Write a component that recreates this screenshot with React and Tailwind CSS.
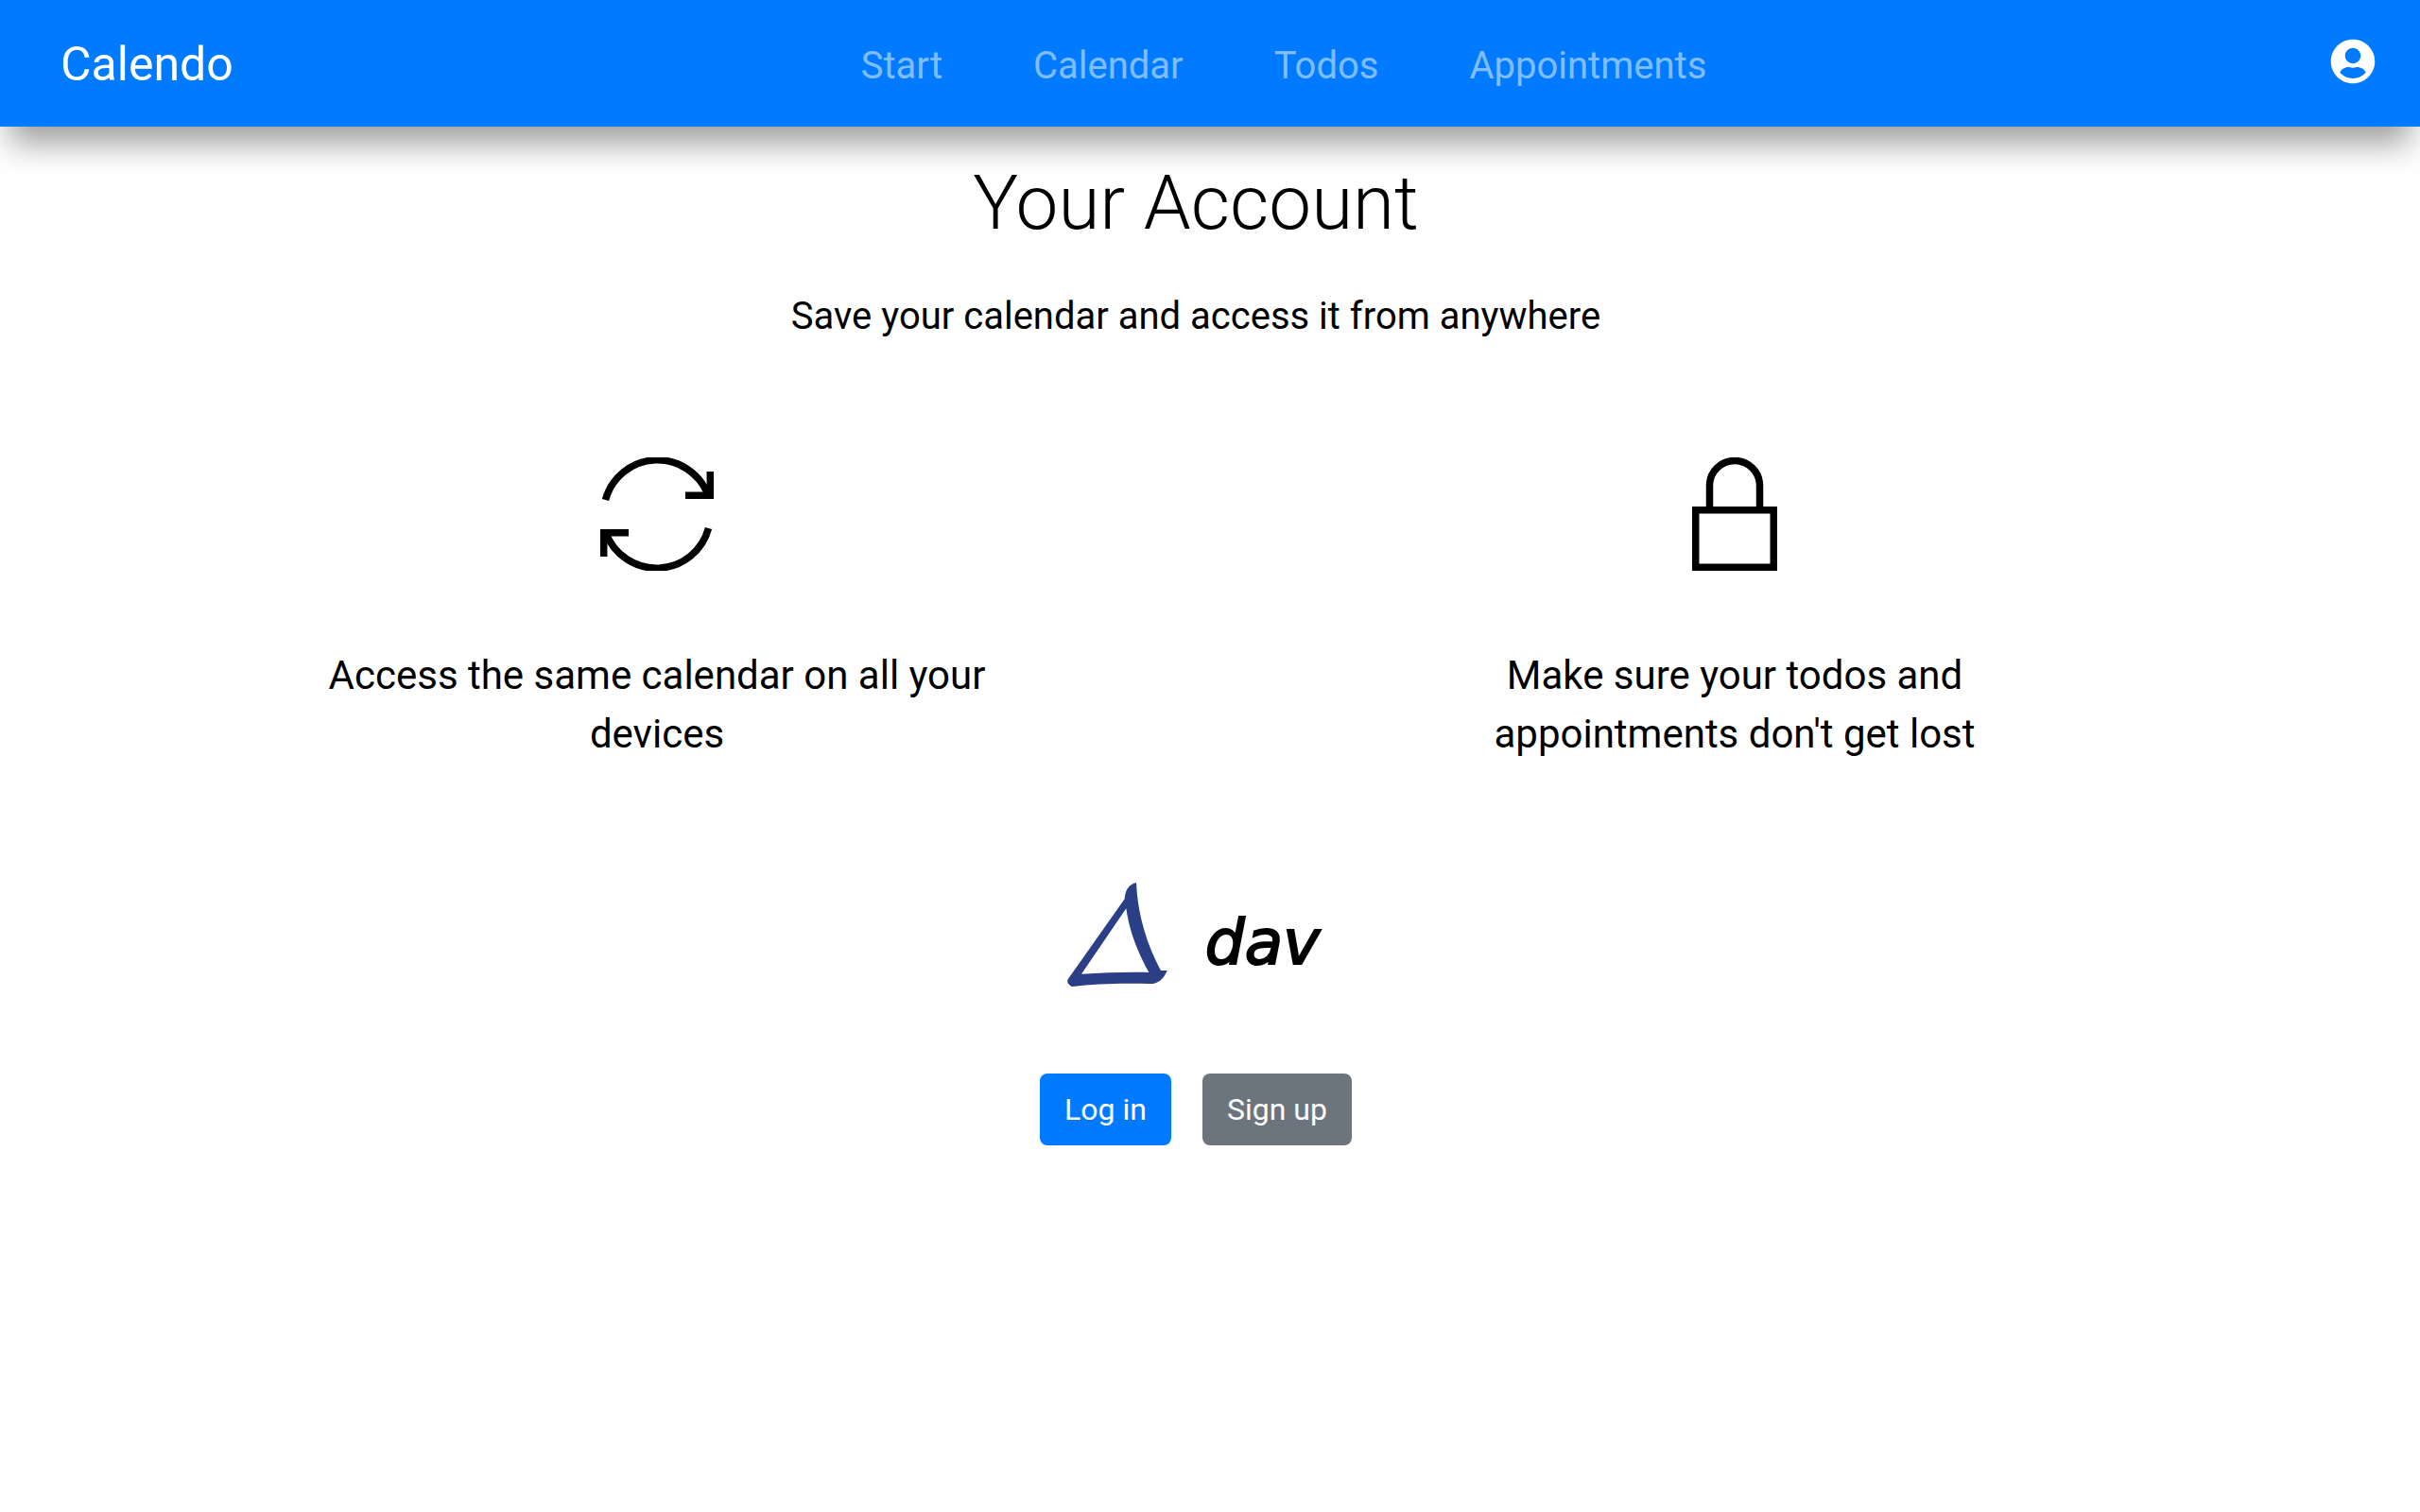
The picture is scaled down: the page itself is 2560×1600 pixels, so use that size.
import { FaUserCircle } from 'react-icons/fa'

function SyncIcon() {
  return (
    <svg width="120" height="120" viewBox="0 0 120 120" fill="none" stroke="#000" strokeWidth="7.5">
      <path d="M5.5 45A57 57 0 0 1 114 40" />
      <path d="M116.3 15V40.3H90" />
      <path d="M114.5 75A57 57 0 0 1 6 80" />
      <path d="M3.7 105V79.7H30" />
    </svg>
  )
}

function LockIcon() {
  return (
    <svg width="90" height="120" viewBox="0 0 90 120" fill="none" stroke="#000" strokeWidth="7.5">
      <path d="M18.5 52V30A26.5 26.5 0 0 1 71.5 30V52" />
      <rect x="3.75" y="55.75" width="82.5" height="60.5" />
    </svg>
  )
}

function DavLogo() {
  return (
    <div className="flex items-end justify-center h-[112px] pr-[6px]">
      <svg width="107" height="112" viewBox="85 40 321 336">
        <path
          fill="#2b3f86"
          fillRule="evenodd"
          d="M90 350L270 95C272 70 280 50 307 43C310 120 330 220 385 322L405 322C395 345 385 358 360 364C280 362 180 362 105 373C95 370 85 360 90 350ZM133 333C200 330 280 326 347 328C315 270 285 200 275 125Z"
        />
      </svg>
      <span className="ml-[40px] mb-[14px] text-[66px] leading-none italic text-black font-['DejaVu_Sans',sans-serif] [-webkit-text-stroke:2px_#000]">dav</span>
    </div>
  )
}

const links = ['Start', 'Calendar', 'Todos', 'Appointments']

export default function App() {
  return (
    <div className="min-h-[1600px] bg-white text-black font-['Roboto',sans-serif]">
      <nav className="flex items-center h-[134px] pl-[64px] pr-[47px] bg-[#007bff] shadow-[0_28px_32px_-10px_rgba(0,0,0,0.38)]">
        <a className="mt-[2px] text-[50px] text-white leading-none">Calendo</a>
        <div className="flex ml-[616px] mt-[6px]">
          {links.map((l) => (
            <a key={l} className="px-[48px] text-[40px] text-white/50">{l}</a>
          ))}
        </div>
        <FaUserCircle size={48} className="ml-auto text-white -mt-[4px]" />
      </nav>
      <main className="w-[2530px]">
        <div className="w-[2280px] mx-auto text-center">
          <h1 className="mt-[33px] text-[80px] leading-[96px] font-light">Your Account</h1>
          <p className="mt-[42px] text-[40px] leading-[60px]">Save your calendar and access it from anywhere</p>
          <div className="grid grid-cols-2 mt-[119px]">
            <div className="flex flex-col items-center">
              <SyncIcon />
              <p className="mt-[80px] max-w-[700px] text-[42px] leading-[62px]">Access the same calendar on all your devices</p>
            </div>
            <div className="flex flex-col items-center">
              <LockIcon />
              <p className="mt-[80px] max-w-[700px] text-[42px] leading-[62px]">Make sure your todos and appointments don't get lost</p>
            </div>
          </div>
          <div className="mt-[125px]"><DavLogo /></div>
          <div className="flex justify-center gap-[33px] mt-[91px]">
            <button className="h-[76px] px-[26px] rounded-[8px] bg-[#007bff] text-white text-[32px]">Log in</button>
            <button className="h-[76px] px-[26px] rounded-[8px] bg-[#6c757d] text-white text-[32px]">Sign up</button>
          </div>
        </div>
      </main>
    </div>
  )
}
